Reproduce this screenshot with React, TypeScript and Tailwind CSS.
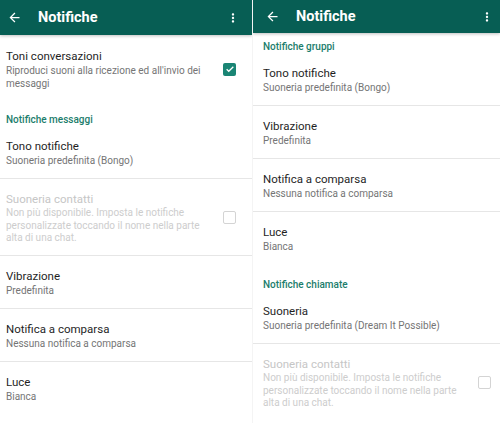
import React from 'react';

type Row = {
  kind: 'row';
  title: string;
  sub: string[];
  disabled?: boolean;
  checkbox?: 'on' | 'off';
  divider?: boolean;
};
type Heading = { kind: 'heading'; text: string; first?: boolean };
type Item = Row | Heading;

const leftItems: Item[] = [
  {
    kind: 'row',
    title: 'Toni conversazioni',
    sub: ["Riproduci suoni alla ricezione ed all'invio dei", 'messaggi'],
    checkbox: 'on',
  },
  { kind: 'heading', text: 'Notifiche messaggi' },
  { kind: 'row', title: 'Tono notifiche', sub: ['Suoneria predefinita (Bongo)'], divider: true },
  {
    kind: 'row',
    title: 'Suoneria contatti',
    sub: ['Non più disponibile. Imposta le notifiche', 'personalizzate toccando il nome nella parte', 'alta di una chat.'],
    disabled: true,
    checkbox: 'off',
    divider: true,
  },
  { kind: 'row', title: 'Vibrazione', sub: ['Predefinita'], divider: true },
  { kind: 'row', title: 'Notifica a comparsa', sub: ['Nessuna notifica a comparsa'], divider: true },
  { kind: 'row', title: 'Luce', sub: ['Bianca'] },
];

const rightItems: Item[] = [
  { kind: 'heading', text: 'Notifiche gruppi', first: true },
  { kind: 'row', title: 'Tono notifiche', sub: ['Suoneria predefinita (Bongo)'], divider: true },
  { kind: 'row', title: 'Vibrazione', sub: ['Predefinita'], divider: true },
  { kind: 'row', title: 'Notifica a comparsa', sub: ['Nessuna notifica a comparsa'], divider: true },
  { kind: 'row', title: 'Luce', sub: ['Bianca'] },
  { kind: 'heading', text: 'Notifiche chiamate' },
  { kind: 'row', title: 'Suoneria', sub: ['Suoneria predefinita (Dream It Possible)'], divider: true },
  {
    kind: 'row',
    title: 'Suoneria contatti',
    sub: ['Non più disponibile. Imposta le notifiche', 'personalizzate toccando il nome nella parte', 'alta di una chat.'],
    disabled: true,
    checkbox: 'off',
  },
];

function Header({ side }: { side: 'left' | 'right' }) {
  return (
    <div
      className={`flex items-center bg-[#075e54] text-white shadow-[0_1px_3px_rgba(0,0,0,0.25)] relative z-10 ${
        side === 'left' ? 'h-[35px] pl-[7px] pr-[12px]' : 'h-[33px] pl-[12px] pr-[6px]'
      }`}
    >
      <svg width="15" height="15" viewBox="0 0 24 24" fill="white">
        <path d="M20 11H7.83l5.59-5.59L12 4l-8 8 8 8 1.41-1.41L7.83 13H20v-2z" />
      </svg>
      <span className="ml-[16px] text-[14.5px] font-bold">Notifiche</span>
      <svg className="ml-auto" width="14" height="14" viewBox="0 0 24 24" fill="white">
        <path d="M12 8c1.1 0 2-.9 2-2s-.9-2-2-2-2 .9-2 2 .9 2 2 2zm0 2c-1.1 0-2 .9-2 2s.9 2 2 2 2-.9 2-2-.9-2-2-2zm0 6c-1.1 0-2 .9-2 2s.9 2 2 2 2-.9 2-2-.9-2-2-2z" />
      </svg>
    </div>
  );
}

function Checkbox({ on }: { on: boolean }) {
  if (on) {
    return (
      <div className="w-[13px] h-[13px] rounded-[2px] bg-[#1a8574] flex items-center justify-center shrink-0">
        <svg width="10" height="10" viewBox="0 0 24 24" fill="none" stroke="white" strokeWidth="3">
          <path d="M4 12.5l5 5L20 6.5" />
        </svg>
      </div>
    );
  }
  return <div className="w-[13px] h-[13px] rounded-[2px] border-[1.5px] border-[#d4d4d4] shrink-0" />;
}

function Panel({ items, side }: { items: Item[]; side: 'left' | 'right' }) {
  const padL = side === 'left' ? 'pl-[6px]' : 'pl-[10px]';
  const padR = side === 'left' ? 'pr-[16px]' : 'pr-[9px]';
  return (
    <div className={`bg-white h-full overflow-hidden ${side === 'left' ? 'w-[252px]' : 'flex-1'}`}>
      <Header side={side} />
      {items.map((item, i) => {
        if (item.kind === 'heading') {
          return (
            <div
              key={i}
              className={`${padL} ${item.first ? 'pt-[7px]' : side === 'left' ? 'pt-[12px]' : 'pt-[14px]'} text-[10px] leading-[13px] font-medium text-[#1c7d6c]`}
            >
              {item.text}
            </div>
          );
        }
        const first = i === 0;
        return (
          <div key={i}>
            <div
              className={`flex items-center ${padL} ${padR} ${first ? 'pt-[13px]' : 'pt-[12px]'} ${
                item.disabled ? 'pb-[10px]' : 'pb-[11px]'
              }`}
            >
              <div className="flex-1 min-w-0">
                <div
                  className={`text-[11.5px] leading-[16px] ${item.disabled ? 'text-[#c6c6c6]' : 'text-[#1f1f1f]'}`}
                >
                  {item.title}
                </div>
                {item.sub.map((s, j) => (
                  <div
                    key={j}
                    className={`text-[10px] ${item.sub.length > 2 ? 'leading-[12.5px]' : 'leading-[13px]'} whitespace-nowrap ${
                      item.disabled ? 'text-[#cdcdcd]' : 'text-[#757575]'
                    }`}
                  >
                    {s}
                  </div>
                ))}
              </div>
              {item.checkbox && <Checkbox on={item.checkbox === 'on'} />}
            </div>
            {item.divider && <div className="h-px bg-[#e6e6e6]" />}
          </div>
        );
      })}
    </div>
  );
}

export default function App() {
  return (
    <div
      className="w-[500px] h-[423px] flex bg-white overflow-hidden"
      style={{ fontFamily: 'Roboto, "Noto Sans", sans-serif' }}
    >
      <Panel items={leftItems} side="left" />
      <div className="w-px bg-[#f4f4f4]" />
      <Panel items={rightItems} side="right" />
    </div>
  );
}
